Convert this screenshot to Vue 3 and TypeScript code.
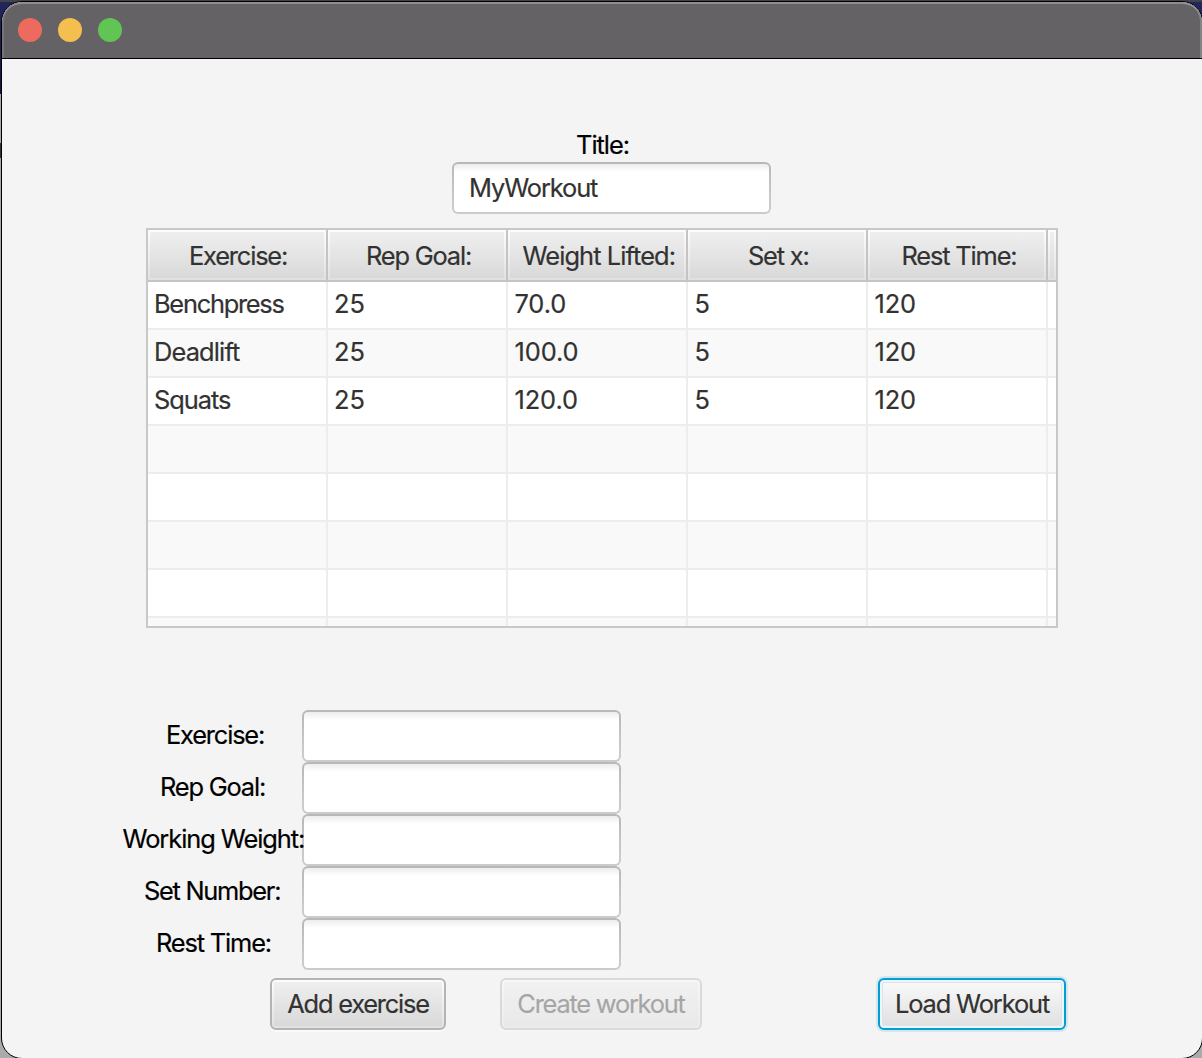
<script setup lang="ts">
interface Txt { text: string; x: number; ls: number }

const headers: Txt[] = [
  { text: 'Exercise:', x: 41, ls: -1.17 },
  { text: 'Rep Goal:', x: 38, ls: -1.17 },
  { text: 'Weight Lifted:', x: 14.5, ls: -0.92 },
  { text: 'Set x:', x: 60, ls: -1.2 },
  { text: 'Rest Time:', x: 33.5, ls: -1.15 },
]

const rows: Txt[][] = [
  ['Benchpress', '25', '70.0', '5', '120'],
  ['Deadlift', '25', '100.0', '5', '120'],
  ['Squats', '25', '120.0', '5', '120'],
  ['', '', '', '', ''],
  ['', '', '', '', ''],
  ['', '', '', '', ''],
  ['', '', '', '', ''],
  ['', '', '', '', ''],
].map((r) => r.map((text, i) => ({
  text,
  x: i > 1 ? 6.5 : 6,
  ls: i > 0 ? -0.1 : text === 'Benchpress' ? -1.26 : text === 'Squats' ? -1.05 : -0.85,
})))

const fields: Txt[] = [
  { text: 'Exercise:', x: 166, ls: -1.17 },
  { text: 'Rep Goal:', x: 160, ls: -1.17 },
  { text: 'Working Weight:', x: 122.5, ls: -1.05 },
  { text: 'Set Number:', x: 144, ls: -1.27 },
  { text: 'Rest Time:', x: 156, ls: -1.15 },
]
</script>

<template>
  <div class="desktop">
    <div class="window">
      <div class="titlebar">
        <i class="light red"></i><i class="light yellow"></i><i class="light green"></i>
      </div>
      <main class="content">
        <label class="title-label">Title:</label>
        <div class="field title-field"><span>MyWorkout</span></div>
        <div class="table">
          <div class="thead">
            <div v-for="h in headers" :key="h.text" class="th">
              <span :style="{ marginLeft: h.x + 'px', letterSpacing: h.ls + 'px' }">{{ h.text }}</span>
            </div>
            <div class="th filler"></div>
          </div>
          <div v-for="(r, i) in rows" :key="i" class="tr">
            <div v-for="(c, j) in r" :key="j" class="td" :style="{ paddingLeft: c.x + 'px', letterSpacing: c.ls + 'px' }">{{ c.text }}</div>
            <div class="td filler"></div>
          </div>
        </div>
        <div class="form">
          <div v-for="f in fields" :key="f.text" class="form-row">
            <label class="form-label" :style="{ paddingLeft: f.x - 2 + 'px', letterSpacing: f.ls + 'px' }">{{ f.text }}</label>
            <div class="field"></div>
          </div>
        </div>
        <div class="actions">
          <button class="btn add"><span>Add exercise</span></button>
          <button class="btn create" disabled><span>Create workout</span></button>
          <button class="btn load"><span>Load Workout</span></button>
        </div>
      </main>
    </div>
  </div>
</template>

<style>
body { margin: 0; overflow: hidden; }
</style>

<style scoped>
* { box-sizing: border-box; }
.desktop {
  width: 1202px;
  height: 1058px;
  padding: 1px 0 0 1px;
  overflow: hidden;
  background:
    linear-gradient(#40444a, #40444a) 0 0 / 100% 2px no-repeat,
    linear-gradient(#22265c, #22265c) 100% 0 / 30px 40px no-repeat,
    linear-gradient(#22265c 0, #14164a 94px, #aaa 94px, #aaa 143px, #333 143px, #333 158px, #aaa 158px, #aaa 100%);
  font-family: Inter, "Liberation Sans", sans-serif;
  font-size: 25.4px;
  letter-spacing: -1.1px;
  color: #323232;
  white-space: nowrap;
  -webkit-text-stroke: 0.2px currentColor;
}
.window {
  width: 1202px;
  height: 1058px;
  border: 1px solid #000;
  border-radius: 21px;
  overflow: hidden;
  background: #f4f4f4;
}
.titlebar {
  display: flex;
  align-items: center;
  gap: 16px;
  height: 57px;
  padding: 0 0 0 16px;
  background: #656265;
  border-bottom: 1px solid #000;
  border-radius: 20px 20px 0 0;
  box-shadow: inset 0 2px 0 #908e8f, inset 2px 0 0 #777577, inset -2px 0 0 #858384;
}
.light { width: 24px; height: 24px; border-radius: 50%; }
.red { background: #ed6a5e; }
.yellow { background: #f5bf4f; }
.green { background: #61c554; }
.content { display: flex; flex-direction: column; height: 999px; padding-top: 70px; }
.title-label {
  height: 33px;
  line-height: 31px;
  margin-left: 574px;
  letter-spacing: -1px;
  color: #000;
}
.field {
  flex: none;
  width: 319px;
  height: 52px;
  padding: 2px;
  border-radius: 6px;
  background:
    linear-gradient(#ededed, #fff 8px) padding-box,
    linear-gradient(#b8b8b8, #cbcbcb 80%) border-box;
  border: 2px solid transparent;
}
.title-field { margin-left: 450px; padding: 0 0 0 15px; line-height: 48px; }
.table {
  flex: none;
  width: 912px;
  height: 400px;
  margin: 14px 0 0 144px;
  border: 2px solid #c8c8c8;
  background: #fff;
  overflow: hidden;
}
.thead { display: flex; height: 52px; border-bottom: 2px solid #c4c4c4; }
.th {
  width: 180px;
  height: 50px;
  line-height: 52px;
  border-right: 2px solid #c4c4c4;
  background:
    linear-gradient(#efefef, #d9d9d9) 2px 2px / calc(100% - 4px) calc(100% - 4px) no-repeat,
    linear-gradient(#fdfdfd, #e1e1e1);
}
.tr { display: flex; height: 48px; border-bottom: 2px solid #ededed; }
.tr:nth-child(odd) { background: #f9f9f9; }
.td {
  width: 180px;
  height: 48px;
  line-height: 44px;
  border-right: 2px solid #ededed;
}
.filler { width: 8px; padding: 0; border-right: 0; }
.form { margin-top: 82px; }
.form-row { display: flex; height: 52px; }
.form-label { width: 300px; flex: none; line-height: 49px; color: #000; overflow: visible; position: relative; z-index: 1; }
.actions { display: flex; margin-top: 8px; padding-left: 268px; }
.btn {
  height: 52px;
  padding: 0;
  border: 2px solid #b4b4b4;
  border-radius: 6px;
  background:
    linear-gradient(#efefef, #d9d9d9) 2px 2px / calc(100% - 4px) calc(100% - 4px) no-repeat,
    linear-gradient(#fdfdfd, #e1e1e1);
  box-shadow: 0 2px 0 #fafafa;
  font: inherit;
  letter-spacing: -1.22px;
  line-height: 48px;
  color: #323232;
  text-align: center;
}
.add { width: 176px; }
.create { width: 202px; margin-left: 54px; opacity: 0.4; }
.load {
  width: 188px;
  margin-left: 176px;
  letter-spacing: -1.12px;
  border-color: #039ed3;
  background: linear-gradient(#fafafa, #dfdfdf);
  box-shadow: 0 0 0 2px #d3e6ed, inset 0 0 0 2px #f0f5f7, inset 0 0 0 3px #d6e6ec;
}
</style>
